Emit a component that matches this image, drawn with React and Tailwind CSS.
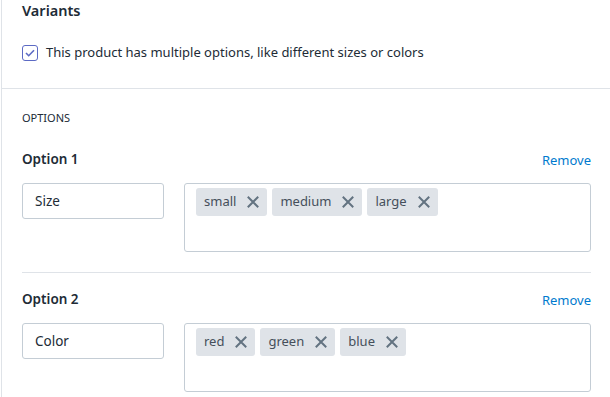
import * as React from 'react';

const options = [
  { label: 'Option 1', name: 'Size', values: ['small', 'medium', 'large'] },
  { label: 'Option 2', name: 'Color', values: ['red', 'green', 'blue'] },
];

function XIcon() {
  return (
    <svg width="12" height="12" viewBox="0 0 12 12" className="shrink-0">
      <path d="M1.5 1.5l9 9M10.5 1.5l-9 9" stroke="#637381" strokeWidth="2" strokeLinecap="square" />
    </svg>
  );
}

function Tag({ value }) {
  return (
    <span className="flex h-[28px] items-center gap-[11px] rounded-[3px] bg-[#dfe3e8] pl-[8px] pr-[8px] text-[13px] text-[#454f5b]">
      {value}
      <XIcon />
    </span>
  );
}

function OptionBlock({ option, first, last }) {
  const pad = first ? 'pt-[21px]' : 'pt-[14px]';
  return (
    <div className={last ? pad : pad + ' pb-[20px] border-b border-[#dfe3e8]'}>
      <div className="flex h-[24px] items-center justify-between">
        <span className="text-[13.5px] font-semibold text-[#212b36]">{option.label}</span>
        <span className="mt-[3px] text-[13px] text-[#007ace]">Remove</span>
      </div>
      <div className="mt-[12px] flex gap-[20px]">
        <div className="flex h-[36px] w-[142px] shrink-0 items-center rounded-[3px] border border-[#c4cdd5] px-[12px] text-[13.5px] text-[#212b36]">
          {option.name}
        </div>
        <div className="flex h-[69px] flex-1 flex-wrap content-start gap-[5px] rounded-[3px] border border-[#c4cdd5] px-[11px] py-[4px]">
          {option.values.map((v) => (
            <Tag key={v} value={v} />
          ))}
        </div>
      </div>
    </div>
  );
}

export default function App() {
  return (
    <div
      className="h-[397px] w-[610px] overflow-hidden bg-white pl-px"
      style={{ fontFamily: '"Noto Sans", "Open Sans", sans-serif' }}
    >
      <div className="h-full border-l border-[#dfe3e8]">
        <div className="h-[89px] border-b border-[#dfe3e8] px-[20px]">
          <div className="text-[14.5px] font-semibold leading-[20px] text-[#212b36]">Variants</div>
          <label className="mt-[25px] flex h-[16px] items-center gap-[8px] text-[13px] text-[#212b36]">
            <span className="flex h-[16px] w-[16px] items-center justify-center rounded-[3px] border border-[#5c6ac4] bg-white">
              <svg width="10" height="8" viewBox="0 0 10 8">
                <path d="M1 4l2.7 2.7L9 1.2" fill="none" stroke="#5c6ac4" strokeWidth="1.6" />
              </svg>
            </span>
            This product has multiple options, like different sizes or colors
          </label>
        </div>
        <div className="px-[20px] pr-[19px]">
          <div className="pt-[21px] text-[11px] uppercase leading-[16px] text-[#212b36]">Options</div>
          {options.map((o, i) => (
            <OptionBlock key={o.label} option={o} first={i === 0} last={i === options.length - 1} />
          ))}
        </div>
      </div>
    </div>
  );
}
